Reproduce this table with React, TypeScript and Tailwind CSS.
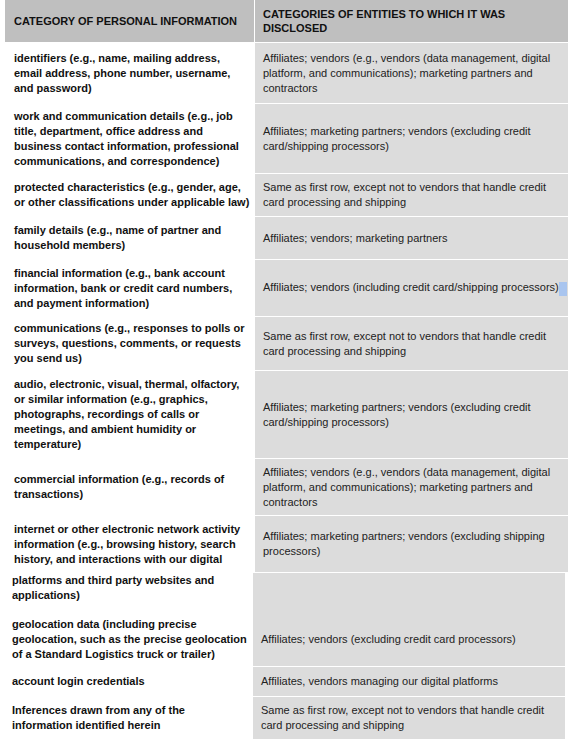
const FONT = { fontFamily: '"Liberation Sans", Arial, Helvetica, sans-serif' };

type Row = { left: string; right: string; h: string; mark?: boolean };

const topRows: Row[] = [
  {
    left: "identifiers (e.g., name, mailing address, email address, phone number, username, and password)",
    right:
      "Affiliates; vendors (e.g., vendors (data management, digital platform, and communications); marketing partners and contractors",
    h: "h-[60px]",
  },
  {
    left: "work and communication details (e.g., job title, department, office address and business contact information, professional communications, and correspondence)",
    right: "Affiliates; marketing partners; vendors (excluding credit card/shipping processors)",
    h: "h-[69px]",
  },
  {
    left: "protected characteristics (e.g., gender, age, or other classifications under applicable law)",
    right: "Same as first row, except not to vendors that handle credit card processing and shipping",
    h: "h-[42px]",
  },
  {
    left: "family details (e.g., name of partner and household members)",
    right: "Affiliates; vendors; marketing partners",
    h: "h-[42px]",
  },
  {
    left: "financial information (e.g., bank account information, bank or credit card numbers, and payment information)",
    right: "Affiliates; vendors (including credit card/shipping processors)",
    h: "h-[56px]",
    mark: true,
  },
  {
    left: "communications (e.g., responses to polls or surveys, questions, comments, or requests you send us)",
    right: "Same as first row, except not to vendors that handle credit card processing and shipping",
    h: "h-[53px]",
  },
  {
    left: "audio, electronic, visual, thermal, olfactory, or similar information (e.g., graphics, photographs, recordings of calls or meetings, and ambient humidity or temperature)",
    right: "Affiliates; marketing partners; vendors (excluding credit card/shipping processors)",
    h: "h-[87px]",
  },
  {
    left: "commercial information (e.g., records of transactions)",
    right:
      "Affiliates; vendors (e.g., vendors (data management, digital platform, and communications); marketing partners and contractors",
    h: "h-[56px]",
  },
];

const bottomRows: Row[] = [
  {
    left: "account login credentials",
    right: "Affiliates, vendors managing our digital platforms",
    h: "h-[29px]",
  },
  {
    left: "Inferences drawn from any of the information identified herein",
    right: "Same as first row, except not to vendors that handle credit card processing and shipping",
    h: "h-[42px]",
  },
];

function Cells({ row }: { row: Row }) {
  return (
    <>
      <div className={`${row.h} flex items-center pl-[9px] bg-white`}>
        <p className="w-[236px] text-[11px] leading-[15px] font-bold text-[#111]">{row.left}</p>
      </div>
      <div className={`${row.h} flex items-center pl-2 pr-1 bg-[#dcdcdc]`}>
        {row.mark ? (
          <p className="whitespace-nowrap text-[11px] leading-[15px] text-[#222]">
            {row.right}
            <span className="inline-block align-middle w-[8px] h-[14px] bg-[#a9c5ef]" />
          </p>
        ) : (
          <p className="text-[11px] leading-[15px] text-[#222]">{row.right}</p>
        )}
      </div>
    </>
  );
}

export default function App() {
  return (
    <div className="w-[574px] h-[741px] bg-white overflow-hidden" style={FONT}>
      {/* first page of the table */}
      <div className="ml-[5px] w-[563px] grid grid-cols-[249px_313px] gap-x-px gap-y-px bg-white">
        <div className="h-[42px] flex items-center pl-[9px] bg-[#bfbfbf]">
          <p className="text-[11px] leading-[14px] font-bold text-[#111]">CATEGORY OF PERSONAL INFORMATION</p>
        </div>
        <div className="h-[42px] flex items-center pl-2 pr-8 bg-[#bfbfbf]">
          <p className="text-[11px] leading-[14px] font-bold text-[#111]">
            CATEGORIES OF ENTITIES TO WHICH IT WAS DISCLOSED
          </p>
        </div>
        {topRows.map((r, i) => (
          <Cells key={i} row={r} />
        ))}
        <div className="h-[56px] pl-[9px] pt-[6px] bg-white">
          <p className="w-[236px] text-[11px] leading-[15px] font-bold text-[#111]">
            internet or other electronic network activity information (e.g., browsing history, search history, and
            interactions with our digital
          </p>
        </div>
        <div className="h-[56px] flex items-center pl-2 pr-1 bg-[#dcdcdc]">
          <p className="text-[11px] leading-[15px] text-[#222]">
            Affiliates; marketing partners; vendors (excluding shipping processors)
          </p>
        </div>
      </div>

      {/* second page of the table */}
      <div className="mt-px ml-[3px] w-[562px] grid grid-cols-[249px_312px] gap-x-px gap-y-px bg-white">
        <div className="flex flex-col bg-white">
          <div className="h-[39px] pl-[9px]">
            <p className="w-[236px] text-[11px] leading-[15px] font-bold text-[#111]">
              platforms and third party websites and applications)
            </p>
          </div>
          <div className="h-[54px] flex items-center pl-[9px]">
            <p className="w-[236px] text-[11px] leading-[15px] font-bold text-[#111]">
              geolocation data (including precise geolocation, such as the precise geolocation of a Standard Logistics
              truck or trailer)
            </p>
          </div>
        </div>
        <div className="flex flex-col bg-[#dcdcdc]">
          <div className="h-[39px]" />
          <div className="h-[54px] flex items-center pl-2 pr-1">
            <p className="text-[11px] leading-[15px] text-[#222]">
              Affiliates; vendors (excluding credit card processors)
            </p>
          </div>
        </div>
        {bottomRows.map((r, i) => (
          <Cells key={i} row={r} />
        ))}
      </div>
    </div>
  );
}
